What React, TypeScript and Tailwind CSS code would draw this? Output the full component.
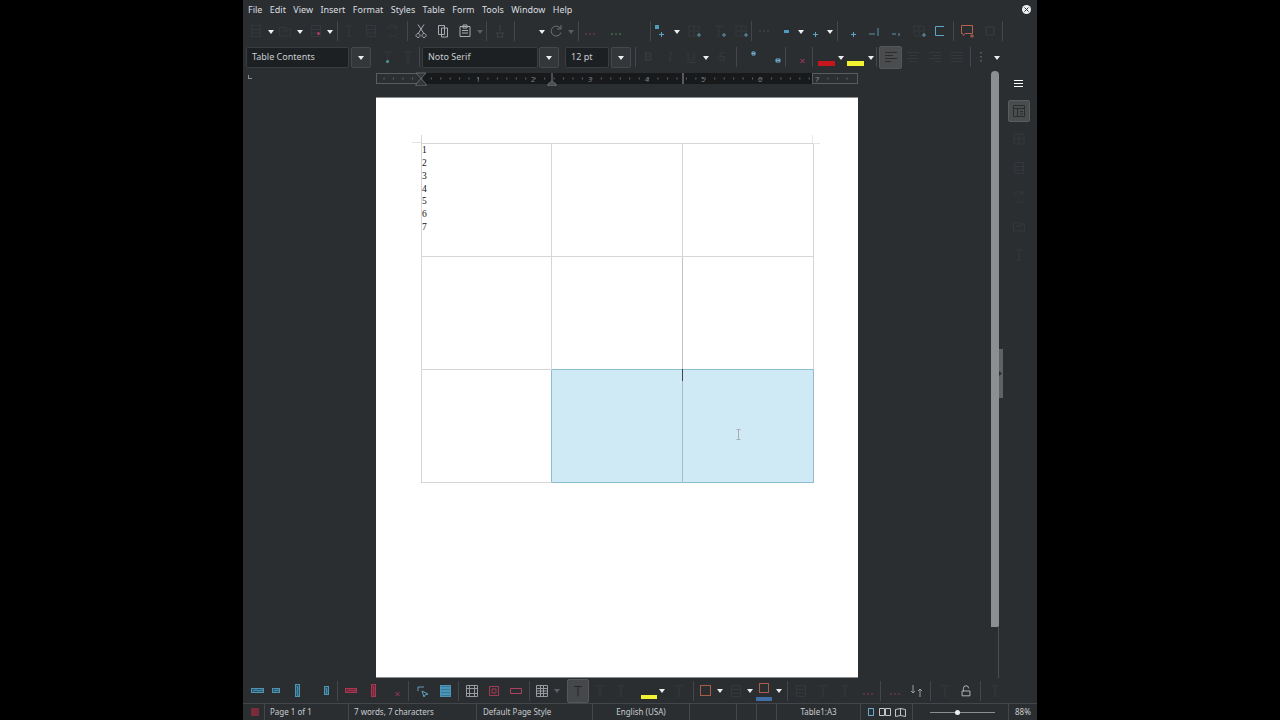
import React from "react";

type P = { children?: React.ReactNode; c?: string };

const Sl = ({ children, c = "w-[22px]" }: P) => (
  <span className={`flex h-full shrink-0 items-center justify-center ${c}`}>{children}</span>
);
const Sep = ({ c = "h-[20px]" }: { c?: string }) => <span className={`w-px shrink-0 bg-[#43474b] ${c}`} />;
const Gap = ({ c }: { c: string }) => <span className={`h-full shrink-0 ${c}`} />;
const Arrow = ({ dim = false }: { dim?: boolean }) => (
  <svg width="6" height="4" viewBox="0 0 6 4" className={dim ? "mt-[1px] text-[#5b5f63]" : "mt-[1px] text-[#eceff1]"}>
    <path d="M0 0h6L3 4z" fill="currentColor" />
  </svg>
);
const Ar = ({ w = "w-[8px]", dim = false }: { w?: string; dim?: boolean }) => (
  <Sl c={w}>
    <Arrow dim={dim} />
  </Sl>
);
const Dim = ({ kind = 0, plus = false }: { kind?: number; plus?: boolean }) => (
  <svg width="16" height="16" viewBox="0 0 16 16" fill="none" stroke="#34383c" strokeWidth="1">
    {kind === 0 && <path d="M3.5 2.5h9v11h-9zM3.5 6.5h9M3.5 10h9" />}
    {kind === 1 && <path d="M2.5 4.5h5l1 1.5h5v7h-11zM5 8h6" />}
    {kind === 2 && <path d="M3 6a5 5 0 0 1 9-1M12 2v3H9M13 10a5 5 0 0 1-9 1" />}
    {kind === 3 && <path d="M4 3h8M8 3v10M6 13h4" />}
    {kind === 4 && <path d="M3 3h10v10H3zM8 3v10M3 8h10" />}
    {plus && <path d="M11 12h4M13 10v4" stroke="#5f93ab" />}
  </svg>
);
const Plus = ({ c = "" }: { c?: string }) => (
  <svg width="16" height="16" viewBox="0 0 16 16" className={c}>
    <path d="M5 11.5h5M7.5 9v5" stroke="#5aa5c8" strokeWidth="1" />
  </svg>
);
const Dots = ({ color }: { color: string }) => (
  <svg width="12" height="12" viewBox="0 0 12 12">
    <path d="M1 9h2M5 9h2M9 9h2" stroke={color} strokeWidth="1" />
  </svg>
);
const Line = ({ d, color = "#c8cbce", w = 16 }: { d: string; color?: string; w?: number }) => (
  <svg width={w} height="16" viewBox={`0 0 ${w} 16`} fill="none" stroke={color} strokeWidth="1">
    <path d={d} />
  </svg>
);
const Hatch = ({ w, h, color, fill }: { w: number; h: number; color: string; fill: string }) => (
  <svg width={w} height={h} viewBox={`0 0 ${w} ${h}`}>
    <rect x="0.5" y="0.5" width={w - 1} height={h - 1} fill={fill} stroke={color} />
    <path d={w > h ? `M2 ${h - 2}L5 2L8 ${h - 2}L11 2L14 ${h - 2}` : `M2 2L${w - 2} 5L2 8L${w - 2} 11L2 14`} stroke={color} fill="none" />
  </svg>
);

const Box = ({ children, c }: P) => (
  <div className={`flex h-[21px] shrink-0 items-center rounded-[2px] border border-[#3a3d40] bg-[#1d2023] pl-[5px] text-[#c9cccf] ${c}`}>
    {children}
  </div>
);
const Btn = ({ c }: { c: string }) => (
  <div className={`flex h-[21px] shrink-0 items-center justify-center rounded-[2px] border border-[#45494d] bg-[#33373a] ${c}`}>
    <Arrow />
  </div>
);

const Menu = () => (
  <div className="flex h-[18px] shrink-0 items-center pl-[5px] text-[9px] text-[#dcdee0]">
    <div className="flex gap-[7.4px]">
      {["File", "Edit", "View", "Insert", "Format", "Styles", "Table", "Form", "Tools", "Window", "Help"].map((m) => (
        <span key={m} className="leading-none">{m}</span>
      ))}
    </div>
    <span className="ml-auto mr-[6px] flex h-[9px] w-[9px] items-center justify-center rounded-full bg-[#eceef0]">
      <svg width="5" height="5" viewBox="0 0 5 5"><path d="M0.5 0.5l4 4M4.5 0.5l-4 4" stroke="#2a2e31" strokeWidth="1" /></svg>
    </span>
  </div>
);

const Toolbar1 = () => (
  <div className="flex h-[26px] shrink-0 items-center">
    <Gap c="w-[2px]" />
    <Sl><Dim /></Sl>
    <Ar />
    <Sl c="w-[20px]"><Dim kind={1} /></Sl>
    <Ar w="w-[10px]" />
    <Sl c="w-[21px] relative">
      <Dim />
      <span className="absolute left-[12px] top-[14px] h-[3px] w-[3px] rounded-full bg-[#b03a5b]" />
    </Sl>
    <Ar />
    <Gap c="w-[3px]" />
    <Sep />
    <Sl><Dim kind={3} /></Sl>
    <Sl><Dim /></Sl>
    <Sl><Dim kind={2} /></Sl>
    <Gap c="w-[3px]" />
    <Sep />
    <Gap c="w-[2px]" />
    <Sl><Line color="#a9adb1" d="M5 1.5l5.5 8.5M11 1.5L5.500 10M5 10.500a2 2 0 1 0 .1 0M11 10.500a2 2 0 1 0 .1 0" /></Sl>
    <Sl><Line color="#a9adb1" d="M3.500 2.500h6v9h-6zM6.500 5h6v9h-6z" /></Sl>
    <Sl><Line color="#a9adb1" d="M3 3.500h10v10H3zM6 2h4v3H6zM5 7.500h6M5 10h6" /></Sl>
    <Ar w="w-[7px]" dim />
    <Gap c="w-[3px]" />
    <Sep />
    <Gap c="w-[2px]" />
    <Sl><Line color="#3f4347" d="M8 2v6M4 10h8M5 14l1-4M11 14l-1-4M5 14h6" /></Sl>
    <Gap c="w-[3px]" />
    <Sep />
    <Sl />
    <Ar w="w-[10px]" />
    <Sl c="w-[18px]"><Line color="#6f7377" d="M12.500 5.500a5 5 0 1 0 .5 4M13 2v4H9" /></Sl>
    <Ar w="w-[12px]" dim />
    <Gap c="w-px" />
    <Sep />
    <Sl><Dots color="#8a3a45" /></Sl>
    <Sl c="w-[30px]"><Dots color="#4f8a4f" /></Sl>
    <Sl c="w-[19px]" />
    <Sep />
    <Sl><span className="relative block h-[16px] w-[16px]"><span className="absolute left-[1px] top-[2px] h-[4px] w-[4px] bg-[#4f9abd]" /><Plus /></span></Sl>
    <Ar />
    <Sl c="w-[26px]"><Dim kind={4} plus /></Sl>
    <Sl c="w-[23px]"><Dim kind={3} plus /></Sl>
    <Sl c="w-[21px]"><Dim kind={4} plus /></Sl>
    <Sep />
    <Gap c="w-[2px]" />
    <Sl><Line color="#4a4e52" d="M2 8h2M6 8h2M10 8h2" /></Sl>
    <Sl c="w-[20px]"><span className="block h-[3px] w-[5px] bg-[#4f9abd]" /></Sl>
    <Ar w="w-[10px]" />
    <Sl c="w-[19px]"><Plus /></Sl>
    <Ar w="w-[10px]" />
    <Gap c="w-[2px]" />
    <Sep />
    <Gap c="w-[5px]" />
    <Sl><Plus /></Sl>
    <Sl c="w-[20px]"><Line color="#5f93ab" d="M2 11h6M11 5v8" /></Sl>
    <Sl><Line color="#5f93ab" d="M4 11h4M11 10v3" /></Sl>
    <Sl c="w-[24px]"><Dim kind={4} plus /></Sl>
    <Sl c="w-[16px]"><Line color="#5aa5c8" d="M13 3.500H4.500v9H13" /></Sl>
    <Gap c="w-[6px]" />
    <Sep />
    <Sl c="w-[26px]"><Line color="#b26350" d="M2.500 2.500h11v8H6l-1.500 2-1-2h-1zM11 13h4M13 11v4" /></Sl>
    <Sl c="w-[19px]"><Line color="#3f3a3e" d="M4 4h8v8H4z" /></Sl>
    <Gap c="w-[3px]" />
    <Sep />
  </div>
);

const Toolbar2 = () => (
  <div className="flex h-[26px] shrink-0 items-center text-[9px]">
    <Gap c="w-[3px]" />
    <Box c="w-[103px]">Table Contents</Box>
    <Gap c="w-[2px]" />
    <Btn c="w-[20px]" />
    <Gap c="w-[6px]" />
    <Sl c="w-[22px] relative"><Dim kind={3} /><span className="absolute left-[9px] top-[16px] h-[3px] w-[3px] rounded-full bg-[#4d9a9a]" /></Sl>
    <Sl c="w-[18px]"><Dim kind={3} /></Sl>
    <Gap c="w-[2px]" />
    <Sep />
    <Gap c="w-[2px]" />
    <Box c="w-[116px]">Noto Serif</Box>
    <Gap c="w-px" />
    <Btn c="w-[20px]" />
    <Gap c="w-[6px]" />
    <Box c="w-[44px]">12 pt</Box>
    <Gap c="w-[2px]" />
    <Btn c="w-[20px]" />
    <Gap c="w-[4px]" />
    <Sep />
    <Sl c="w-[24px] text-[13px] font-bold text-[#34383c]">B</Sl>
    <Sl c="w-[20px] text-[13px] italic text-[#34383c]">I</Sl>
    <Sl c="w-[22px] text-[13px] underline text-[#34383c]">U</Sl>
    <Ar />
    <Sl c="w-[24px] text-[13px] line-through text-[#34383c]">S</Sl>
    <Gap c="w-[2px]" />
    <Sep />
    <Sl c="w-[34px]"><Line w={10} color="#6fb0d0" d="M3 3h3v3H3zM3 4.500h3" /></Sl>
    <Sl c="w-[14px]"><Line w={10} color="#6fb0d0" d="M3 10h4v3H3zM3 11.500h4" /></Sl>
    <Sep />
    <Gap c="w-[10px]" />
    <Sl c="w-[14px]"><Line w={8} color="#b0395c" d="M1.500 10l4 4M5.500 10l-4 4" /></Sl>
    <Gap c="w-[2px]" />
    <Sep />
    <Gap c="w-[4px]" />
    <Sl c="w-[18px]">
      <span className="mt-[13px] block h-[5px] w-[17px] bg-[#c4161c]" />
    </Sl>
    <Gap c="w-[2px]" />
    <Ar />
    <Gap c="w-px" />
    <Sl c="w-[18px]">
      <span className="mt-[13px] block h-[5px] w-[17px] bg-[#f2f230]" />
    </Sl>
    <Gap c="w-[3px]" />
    <Ar />
    <Gap c="w-px" />
    <Sep />
    <Gap c="w-[2px]" />
    <div className="flex h-[23px] w-[23px] shrink-0 items-center justify-center rounded-[2px] border border-[#54575a] bg-[#4a4c4e]">
      <Line color="#2a2d30" d="M2 3.500h12M2 6.500h8M2 9.500h12M2 12.500h6" />
    </div>
    <Sl><Line color="#34383c" d="M2 3.500h12M4 6.500h8M2 9.500h12M4 12.500h8" /></Sl>
    <Sl><Line color="#34383c" d="M2 3.500h12M6 6.500h8M2 9.500h12M8 12.500h6" /></Sl>
    <Sl><Line color="#34383c" d="M2 3.500h12M2 6.500h12M2 9.500h12M2 12.500h12" /></Sl>
    <Gap c="w-[2px]" />
    <Sep />
    <Sl c="w-[20px]"><Line color="#7b8085" d="M8 3v1.500M8 7v1.500M8 11v1.500" /></Sl>
    <Ar w="w-[12px]" />
  </div>
);

const nums = [
  [478, "1"], [533, "2"], [590, "3"], [647, "4"], [703, "5"], [760, "6"], [817, "7"],
] as const;
const ticks = Array.from({ length: 50 }, (_, i) => 376 + i * 9.45 + 8);

const Ruler = () => (
  <div className="flex h-[18px] shrink-0 items-start">
    <span className="ml-[5px] mt-[5px] h-[4px] w-[4px] border-b border-l border-[#8a8e92]" />
    <svg width="482" height="14" viewBox="0 0 482 14" className="ml-[124px] mt-[2px] shrink-0">
      <rect x="45" y="1" width="391" height="11" fill="#17191b" />
      <rect x="0.5" y="1.500" width="45" height="10" fill="#2b2f32" stroke="#585c60" />
      <rect x="436.500" y="1.500" width="45" height="10" fill="#2b2f32" stroke="#585c60" />
      {ticks.map((t) => (
        <path key={t} d={`M${t - 376} 5.500v2`} stroke="#63676b" strokeWidth="1" />
      ))}
      {nums.map(([x, n]) => (
        <text key={n} x={x - 376} y="9.500" fontSize="7" textAnchor="middle" fill="#7f8387" fontFamily="Noto Sans">{n}</text>
      ))}
      <path d="M40 1h10l-5 5.500 5 5.500v2H40v-2l5-5.500L40 1z" fill="#33373a" stroke="#7b7f83" strokeWidth="0.700" />
      <path d="M176 9l-4 3v2h8v-2l-4-3z" fill="#4a4e52" stroke="#7b7f83" strokeWidth="0.700" />
      <path d="M176 1v8" stroke="#7f8387" />
      <rect x="306" y="1" width="2" height="11" fill="#55595d" />
    </svg>
  </div>
);

const cell = "h-[113px] border-b border-r";
const gray = "border-[#d6d6d6]";

const Table = () => (
  <div className="relative ml-[45px] w-[392px]">
    <div className="grid grid-cols-[130px_131px_131px] border-l border-t border-[#d6d6d6]">
      <div className={`${cell} ${gray} font-['Liberation_Serif',serif] text-[9.5px] leading-[12.85px] text-[#111]`}>
        {["1", "2", "3", "4", "5", "6", "7"].map((n) => (
          <div key={n}>{n}</div>
        ))}
      </div>
      <div className={`${cell} ${gray}`} />
      <div className={`${cell} ${gray}`} />
      <div className={`${cell} ${gray}`} />
      <div className={`${cell} border-r-[#c4c4c4] border-b-[#8fbdd2]`} />
      <div className={`${cell} border-r-[#d6d6d6] border-b-[#8fbdd2]`} />
      <div className={`${cell} border-r-[#8fbdd2] border-b-[#d6d6d6]`} />
      <div className={`${cell} border-r-[#a9bcc6] border-b-[#8fbdd2] bg-[#cfe9f5]`} />
      <div className={`${cell} border-r-[#8fbdd2] border-b-[#8fbdd2] bg-[#cfe9f5]`} />
    </div>
    <span className="absolute left-[-9px] top-[-1px] h-px w-[9px] bg-[#e4e4e4]" />
    <span className="absolute left-0 top-[-8px] h-[8px] w-px bg-[#d6d6d6]" />
    <span className="absolute left-[392px] top-0 h-px w-[7px] bg-[#e4e4e4]" />
    <span className="absolute left-[391px] top-[-8px] h-[8px] w-px bg-[#e8e8e8]" />
    <span className="absolute left-[261px] top-[226px] h-[12px] w-px bg-[#444]" />
    <svg width="5" height="11" viewBox="0 0 5 11" className="absolute left-[315px] top-[286px]">
      <path d="M0.500 0.500h4M0.500 10.500h4M2.500 0.500v10" stroke="#a8aeb2" strokeWidth="1" fill="none" />
    </svg>
  </div>
);

const Doc = () => (
  <div className="flex min-h-0 w-[748px] shrink-0 flex-col">
    <Ruler />
    <div className="min-h-0 flex-1 pl-[133px] pt-[9px]">
      <div className="h-[581px] w-[482px] overflow-hidden border-t border-b border-[#8a8d90] bg-white pt-[45px]">
        <Table />
      </div>
    </div>
  </div>
);

const Scroll = () => (
  <div className="relative w-[14px] shrink-0">
    <div className="mt-[1px] h-[556px] w-[8px] rounded-t-[4px] bg-[#8c8f91]" />
    <div className="absolute left-[7px] top-[556px] h-[52px] w-px bg-[#4a4e52]" />
    <div className="absolute left-[8px] top-[279px] flex h-[49px] w-[4px] items-center bg-[#5e6265]">
      <svg width="3" height="5" viewBox="0 0 3 5"><path d="M0 0l3 2.500L0 5z" fill="#2a2e31" /></svg>
    </div>
  </div>
);

const Side = () => (
  <div className="flex w-[32px] shrink-0 flex-col items-center">
    <div className="ml-[-6px] mt-[10px] flex flex-col gap-[2px]">
      <span className="h-px w-[9px] bg-white" />
      <span className="h-px w-[9px] bg-white" />
      <span className="h-px w-[9px] bg-white" />
    </div>
    <div className="ml-[-5px] mt-[13px] flex h-[22px] w-[22px] items-center justify-center rounded-[2px] border border-[#5a5d60] bg-[#4a4c4e]">
      <Line color="#2a2d30" d="M2.500 2.500h11v11h-11zM2.500 5.500h11M6.500 5.500v8M9 8.500h3M9 11h3" />
    </div>
    <div className="ml-[-5px] mt-[9px] flex flex-col gap-[13px]">
      <Dim kind={4} />
      <Dim kind={0} />
      <Dim kind={2} />
      <Dim kind={1} />
      <Dim kind={3} />
    </div>
  </div>
);

const BottomBar = () => (
  <div className="flex h-[25px] shrink-0 items-center">
    <Gap c="w-[5px]" />
    <Sl c="w-[18px]"><Hatch w={13} h={5} color="#4f93b5" fill="#27566b" /></Sl>
    <Sl c="w-[20px]"><Hatch w={8} h={5} color="#4f93b5" fill="#27566b" /></Sl>
    <Sl c="w-[22px]"><Hatch w={5} h={13} color="#4f93b5" fill="#27566b" /></Sl>
    <Gap c="w-[9px]" />
    <Sl c="w-[18px]"><Hatch w={5} h={9} color="#4f93b5" fill="#27566b" /></Sl>
    <Gap c="w-[2px]" />
    <Sep />
    <Sl c="w-[26px]"><Hatch w={12} h={5} color="#a63a55" fill="#6e2438" /></Sl>
    <Sl c="w-[18px]"><Hatch w={5} h={13} color="#a63a55" fill="#6e2438" /></Sl>
    <Gap c="w-[5px]" />
    <Sl c="w-[21px]"><Line w={8} color="#a63a55" d="M1.500 9l4 4M5.500 9l-4 4" /></Sl>
    <Sep />
    <Gap c="w-[3px]" />
    <Sl c="w-[22px]"><Line color="#5f9fc0" d="M3 4h6M3 4v4M7 8l6 3-3 1-1 2z" /></Sl>
    <Sl c="w-[22px]"><span className="block h-[12px] w-[11px] border border-[#4f93b5] bg-[repeating-linear-gradient(0deg,#2f7ba0_0_1px,#4f93b5_1px_3px)]" /></Sl>
    <Gap c="w-[2px]" />
    <Sep />
    <Gap c="w-[2px]" />
    <Sl c="w-[22px]"><Line color="#989ca0" d="M2.500 2.500h11v11h-11zM5.500 2.500v11M10.500 2.500v11M2.500 5.500h11M2.500 10.500h11" /></Sl>
    <Sl c="w-[22px]"><Line color="#a63a55" d="M3.500 3.500h9v9h-9zM6 6h4v4H6z" /></Sl>
    <Sl c="w-[22px]"><Line color="#b0405f" d="M2.500 5.500h11v5h-11z" /></Sl>
    <Gap c="w-[2px]" />
    <Sep />
    <Sl c="w-[24px]"><Line color="#989ca0" d="M2.500 2.500h11v11h-11zM6.500 2.500v11M9.500 2.500v11M2.500 5.500h11M2.500 8h11M2.500 10.500h11" /></Sl>
    <Ar w="w-[6px]" dim />
    <Gap c="w-[7px]" />
    <div className="flex h-[24px] w-[22px] shrink-0 items-center justify-center rounded-[2px] border border-[#55585b] bg-[#45474a]">
      <Line color="#24272a" d="M4 3.500h8M8 3.500v10" />
    </div>
    <Sl c="w-[21px]"><Dim kind={3} /></Sl>
    <Sl c="w-[21px]"><Dim kind={3} /></Sl>
    <Gap c="w-[9px]" />
    <Sl c="w-[18px]"><span className="mt-[12px] block h-[4px] w-[16px] bg-[#f2f230]" /></Sl>
    <Ar />
    <Sl c="w-[26px]"><Dim kind={3} /></Sl>
    <Gap c="w-px" />
    <Sep />
    <Gap c="w-px" />
    <Sl c="w-[20px]"><span className="block h-[11px] w-[11px] border border-[#a85c4a]" /></Sl>
    <Ar w="w-[10px]" />
    <Sl c="w-[21px]"><Dim /></Sl>
    <Ar w="w-[8px]" />
    <Sl c="w-[20px]">
      <span className="relative block h-[16px] w-[16px]">
        <span className="absolute left-[3px] top-0 h-[10px] w-[10px] border border-[#a85c4a]" />
        <span className="absolute bottom-[-2px] left-0 h-[4px] w-[16px] bg-[#3f6fa5]" />
      </span>
    </Sl>
    <Ar w="w-[10px]" />
    <Gap c="w-[3px]" />
    <Sep />
    <Gap c="w-[2px]" />
    <Sl c="w-[22px]"><Dim /></Sl>
    <Sl c="w-[22px]"><Dim kind={3} /></Sl>
    <Sl c="w-[22px]"><Dim kind={3} /></Sl>
    <Sl c="w-[24px]"><Dots color="#8a3a45" /></Sl>
    <Sep />
    <Sl c="w-[28px]"><Dots color="#8a3a45" /></Sl>
    <Sl c="w-[16px]"><Line color="#989ca0" d="M4 2v8M2 8l2 2 2-2M11 14V6M9 8l2-2 2 2" /></Sl>
    <Gap c="w-[5px]" />
    <Sep />
    <Sl c="w-[28px]"><Dim kind={3} /></Sl>
    <Sl c="w-[14px]"><Line color="#c2c5c8" d="M3.500 8h9v5.500h-9zM5 8V5a3 3 0 0 1 6 0" /></Sl>
    <Gap c="w-[7px]" />
    <Sep />
    <Sl c="w-[28px]"><Dim kind={3} /></Sl>
  </div>
);

const SS = ({ children, c }: P) => (
  <span className={`flex h-full shrink-0 items-center border-r border-[#43474b] ${c}`}>{children}</span>
);

const Status = () => (
  <div className="flex h-[17px] shrink-0 items-center border-t border-[#43474b] text-[8px] text-[#c9cccf]">
    <SS c="w-[22px] justify-center pl-[3px]">
      <span className="block h-[8px] w-[8px] rounded-[1px] bg-[#7a2c3a]" />
    </SS>
    <SS c="w-[84px] pl-[5px]">Page 1 of 1</SS>
    <SS c="w-[128px] pl-[5px]">7 words, 7 characters</SS>
    <SS c="w-[116px] pl-[6px]">Default Page Style</SS>
    <SS c="w-[97px] justify-center">English (USA)</SS>
    <SS c="w-[47px]" />
    <SS c="w-[20px]" />
    <SS c="w-[20px]" />
    <SS c="w-[84px] justify-center">Table1:A3</SS>
    <SS c="w-[52px] justify-center gap-[2px]">
      <Line w={10} color="#6fb0d0" d="M2.500 4.500h5v7h-5z" />
      <Line w={14} color="#c2c5c8" d="M1.500 4.500h5v7h-5zM7.500 4.500h5v7h-5z" />
      <Line w={13} color="#c2c5c8" d="M1.500 5.500l5-1v7l-5 1zM6.500 4.500l5 1v7l-5-1z" />
    </SS>
    <SS c="w-[96px] pl-[17px]">
      <span className="relative block h-px w-[65px] bg-[#8a8e92]">
        <span className="absolute left-[25px] top-[-2px] h-[5px] w-[5px] rounded-full bg-[#eceff1]" />
      </span>
    </SS>
    <span className="pl-[6px]">88%</span>
  </div>
);

export default function App() {
  return (
    <div className="flex h-screen w-full justify-center overflow-hidden bg-black font-['Noto_Sans',sans-serif]">
      <div className="flex h-[720px] w-[794px] flex-col bg-[#2a2e31]">
        <Menu />
        <Toolbar1 />
        <Toolbar2 />
        <div className="flex min-h-0 flex-1">
          <Doc />
          <Scroll />
          <Side />
        </div>
        <BottomBar />
        <Status />
      </div>
    </div>
  );
}
